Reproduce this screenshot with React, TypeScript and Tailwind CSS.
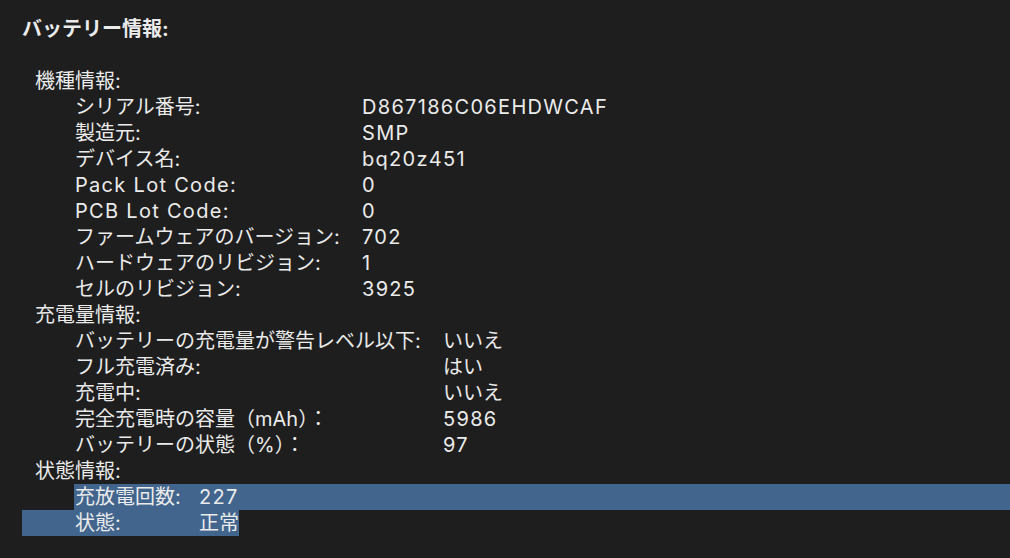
import React from "react";

type Row = [string, string];

const g1: Row[] = [
  ["シリアル番号:", "D867186C06EHDWCAF"],
  ["製造元:", "SMP"],
  ["デバイス名:", "bq20z451"],
  ["Pack Lot Code:", "0"],
  ["PCB Lot Code:", "0"],
  ["ファームウェアのバージョン:", "702"],
  ["ハードウェアのリビジョン:", "1"],
  ["セルのリビジョン:", "3925"],
];

const g2: Row[] = [
  ["バッテリーの充電量が警告レベル以下:", "いいえ"],
  ["フル充電済み:", "はい"],
  ["充電中:", "いいえ"],
  ["完全充電時の容量（mAh）：", "5986"],
  ["バッテリーの状態（%）：", "97"],
];

const isLatin = (s: string) => /^[\x00-\x7f]+$/.test(s);

function T({ s, className = "" }: { s: string; className?: string }) {
  return (
    <span className={(isLatin(s) ? "tracking-[1.3px] " : "") + className}>
      {s}
    </span>
  );
}

export default function App() {
  return (
    <div
      className="w-[1010px] h-[558px] overflow-hidden bg-[#1e1e1e] text-[#ebebeb] text-[20px] leading-[26px] pt-[16px] antialiased"
      style={{ fontFamily: 'Inter, "Noto Sans CJK JP", sans-serif' }}
    >
      <div className="pl-[22px] font-bold">バッテリー情報:</div>
      <div className="h-[26px]" />
      <div className="pl-[35px]">機種情報:</div>
      {g1.map(([k, v]) => (
        <div key={k} className="flex pl-[75px] whitespace-nowrap">
          <T s={k} className="w-[287px] shrink-0" />
          <T s={v} />
        </div>
      ))}
      <div className="pl-[35px]">充電量情報:</div>
      {g2.map(([k, v]) => (
        <div key={k} className="flex pl-[75px] whitespace-nowrap">
          <T s={k} className="w-[368px] shrink-0" />
          <T s={v} />
        </div>
      ))}
      <div className="pl-[35px]">状態情報:</div>
      <div className="ml-[74px] pl-[1px] bg-[#41658d] flex whitespace-nowrap">
        <span className="w-[124px] shrink-0">充放電回数:</span>
        <T s="227" />
      </div>
      <div className="ml-[22px] w-[217px] pl-[53px] bg-[#41658d] flex whitespace-nowrap">
        <span className="w-[124px] shrink-0">状態:</span>
        <span>正常</span>
      </div>
    </div>
  );
}
